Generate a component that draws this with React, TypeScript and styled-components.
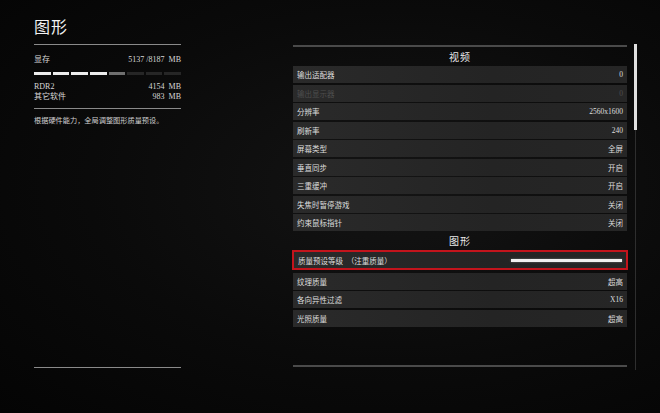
import React from 'react';
import styled, { createGlobalStyle } from 'styled-components';

const GlobalStyle = createGlobalStyle`
  html, body {
    margin: 0;
    padding: 0;
    background: #070707;
  }
  body {
    font-family: "Liberation Serif", "Noto Sans CJK SC", serif;
    color: #e6e6e6;
  }
`

const Screen = styled.div`
  width: 660px;
  height: 413px;
  box-sizing: border-box;
  display: flex;
  padding: 16px 0 0 34px;
  background: radial-gradient(ellipse at 60% 45%, #141414 0%, #0a0a0a 55%, #040404 100%);
  overflow: hidden;
`

const Sidebar = styled.div`
  width: 147px;
  height: 352px;
  display: flex;
  flex-direction: column;
`

const Title = styled.div`
  font-size: 16px;
  line-height: 24px;
  color: #f2f2f2;
  letter-spacing: 1px;
`

const Rule = styled.div<{ $top?: number }>`
  height: 1px;
  background: #8a8a8a;
  margin-top: ${p => p.$top ?? 0}px;
  flex-shrink: 0;
`

const InfoRow = styled.div`
  display: flex;
  justify-content: space-between;
  font-size: 8px;
  line-height: 10px;
  color: #d8d8d8;
`

const MemoryBar = styled.div`
  display: flex;
  gap: 2px;
  margin: 7px 0 7px;
`

const Segment = styled.div<{ $level: 'full' | 'part' | 'empty' }>`
  flex: 1;
  height: 3px;
  background: ${p => p.$level === 'full' ? '#ececec' : p.$level === 'part' ? '#6f6f6f' : '#262626'};
`

const Hint = styled.div`
  font-size: 7.2px;
  line-height: 12px;
  margin-top: 6px;
  color: #d0d0d0;
  white-space: nowrap;
`

const Spacer = styled.div`
  flex: 1;
`

const Panel = styled.div`
  margin-left: 112px;
  margin-top: 29px;
  width: 334px;
  height: 322px;
  display: flex;
  flex-direction: column;
`

const PanelRule = styled.div`
  height: 2px;
  background: #4a4a4a;
  flex-shrink: 0;
`

const SectionTitle = styled.div<{ $top: number }>`
  text-align: center;
  font-size: 10px;
  line-height: 14px;
  margin: ${p => p.$top}px 0 1px;
  color: #e8e8e8;
  letter-spacing: 1px;
`

const Rows = styled.div`
  display: flex;
  flex-direction: column;
  gap: 1.5px;
`

const Row = styled.div<{ $dim?: boolean; $active?: boolean }>`
  height: ${p => p.$active ? 16 : 17}px;
  display: flex;
  align-items: center;
  justify-content: space-between;
  padding: 0 4px;
  background: linear-gradient(90deg, #2a2a2a 0%, #242424 60%, #262626 100%);
  border: ${p => p.$active ? '2px solid #c3141c' : 'none'};
  margin: ${p => p.$active ? '0 -1px 1px' : '0'};
  font-size: 7.5px;
  color: ${p => p.$dim ? '#4e4e4e' : '#dedede'};
`

const Slider = styled.div`
  width: 111px;
  height: 3px;
  background: #f0f0f0;
  box-shadow: 0 0 2px rgba(255, 255, 255, 0.4);
`

const Scrollbar = styled.div`
  margin-left: 7px;
  margin-top: 28px;
  width: 3px;
  height: 326px;
  display: flex;
  flex-direction: column;
  align-items: center;
`

const Thumb = styled.div`
  width: 3px;
  height: 86px;
  background: #e0e0e0;
`

const Track = styled.div`
  flex: 1;
  width: 1px;
  background: #2e2e2e;
`

const video: { label: string; value: string; dim?: boolean }[] = [
  { label: '输出适配器', value: '0' },
  { label: '输出显示器', value: '0', dim: true },
  { label: '分辨率', value: '2560x1600' },
  { label: '刷新率', value: '240' },
  { label: '屏幕类型', value: '全屏' },
  { label: '垂直同步', value: '开启' },
  { label: '三重缓冲', value: '开启' },
  { label: '失焦时暂停游戏', value: '关闭' },
  { label: '约束鼠标指针', value: '关闭' },
]

const graphics = [
  { label: '纹理质量', value: '超高' },
  { label: '各向异性过滤', value: 'X16' },
  { label: '光照质量', value: '超高' },
]

const memory: ('full' | 'part' | 'empty')[] = ['full', 'full', 'full', 'full', 'part', 'empty', 'empty', 'empty']

export default function App() {
  return (
    <>
      <GlobalStyle />
      <Screen>
        <Sidebar>
          <Title>图形</Title>
          <Rule $top={4} />
          <InfoRow style={{ marginTop: 10 }}>
            <span>显存</span>
            <span>5137 /8187&nbsp; MB</span>
          </InfoRow>
          <MemoryBar>
            {memory.map((level, i) => <Segment key={i} $level={level} />)}
          </MemoryBar>
          <InfoRow>
            <span>RDR2</span>
            <span>4154&nbsp; MB</span>
          </InfoRow>
          <InfoRow>
            <span>其它软件</span>
            <span>983&nbsp; MB</span>
          </InfoRow>
          <Rule $top={6} />
          <Hint>根据硬件能力，全局调整图形质量预设。</Hint>
          <Spacer />
          <Rule />
        </Sidebar>

        <Panel>
          <PanelRule />
          <SectionTitle $top={4}>视频</SectionTitle>
          <Rows>
            {video.map(r => (
              <Row key={r.label} $dim={r.dim}>
                <span>{r.label}</span>
                <span>{r.value}</span>
              </Row>
            ))}
          </Rows>
          <SectionTitle $top={4}>图形</SectionTitle>
          <Rows>
            <Row $active>
              <span>质量预设等级&nbsp;&nbsp;（注重质量）</span>
              <Slider />
            </Row>
            {graphics.map(r => (
              <Row key={r.label}>
                <span>{r.label}</span>
                <span>{r.value}</span>
              </Row>
            ))}
          </Rows>
          <Spacer />
          <PanelRule />
        </Panel>

        <Scrollbar>
          <Thumb />
          <Track />
        </Scrollbar>
      </Screen>
    </>
  )
}
